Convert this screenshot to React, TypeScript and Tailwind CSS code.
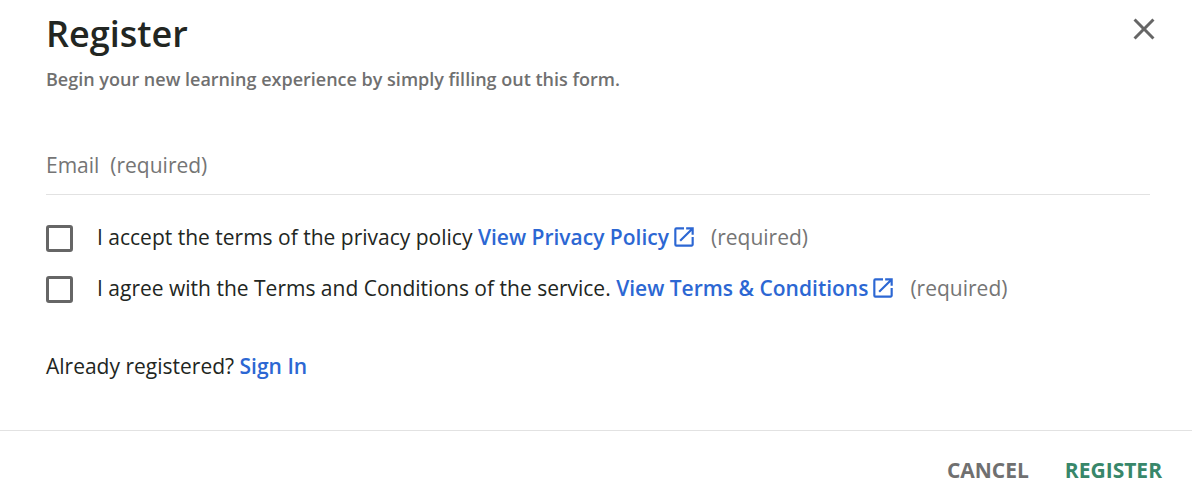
import { useState } from "react";
import { MdClose, MdOpenInNew } from "react-icons/md";

type ConsentProps = {
  id: string;
  text: string;
  linkText: string;
};

function Consent({ id, text, linkText }: ConsentProps) {
  const [checked, setChecked] = useState(false);

  return (
    <div className="flex items-end text-[21px] leading-[30px]">
      <input
        id={id}
        type="checkbox"
        required
        checked={checked}
        onChange={(e) => setChecked(e.target.checked)}
        className="appearance-none size-[27px] shrink-0 rounded-[3px] border-3 border-[#666666] checked:bg-[#666666]"
      />
      <label htmlFor={id} className="ml-6 whitespace-pre">
        {text}{" "}
      </label>
      <a href="#" className="flex items-center gap-[2px] font-semibold text-[#2c67d3]">
        {linkText}
        <MdOpenInNew className="size-[26px]" />
      </a>
      <span className="ml-[14px] text-[#757575]">(required)</span>
    </div>
  );
}

function App() {
  const [email, setEmail] = useState("");

  return (
    <form className="bg-white font-['Open_Sans',sans-serif] text-[#222622]">
      <div className="pt-2 pr-[42px] pl-[46px]">
        <header className="flex items-start justify-between">
          <div>
            <h1 className="text-4xl leading-[52px] font-semibold">Register</h1>
            <p className="mt-[3px] text-lg leading-8 font-semibold text-[#707070]">
              Begin your new learning experience by simply filling out this form.
            </p>
          </div>
          <button type="button" aria-label="Close" className="-mr-3 mt-[3px] text-[#666666]">
            <MdClose className="size-9" />
          </button>
        </header>

        <input
          type="email"
          aria-label="Email (required)"
          placeholder="Email  (required)"
          value={email}
          onChange={(e) => setEmail(e.target.value)}
          className="mt-10 block h-[60px] w-full border-b border-[#e2e2e2] text-[21px] whitespace-pre outline-none placeholder:text-[#757575]"
        />

        <div className="mt-[27px] flex flex-col gap-[21px]">
          <Consent
            id="privacy"
            text="I accept the terms of the privacy policy"
            linkText="View Privacy Policy"
          />
          <Consent
            id="terms"
            text="I agree with the Terms and Conditions of the service."
            linkText="View Terms & Conditions"
          />
        </div>

        <p className="mt-12 text-[21px] leading-[30px]">
          Already registered?{" "}
          <a href="#" className="font-semibold text-[#2c67d3]">
            Sign In
          </a>
        </p>
      </div>

      <footer className="mt-[49px] flex justify-end gap-9 border-t border-[#e2e2e2] px-[30px] pt-6 text-[21px] leading-[30px] font-bold">
        <button type="button" className="text-[#707070]">
          CANCEL
        </button>
        <button type="submit" className="text-[#38876a]">
          REGISTER
        </button>
      </footer>
    </form>
  );
}

export default App;
